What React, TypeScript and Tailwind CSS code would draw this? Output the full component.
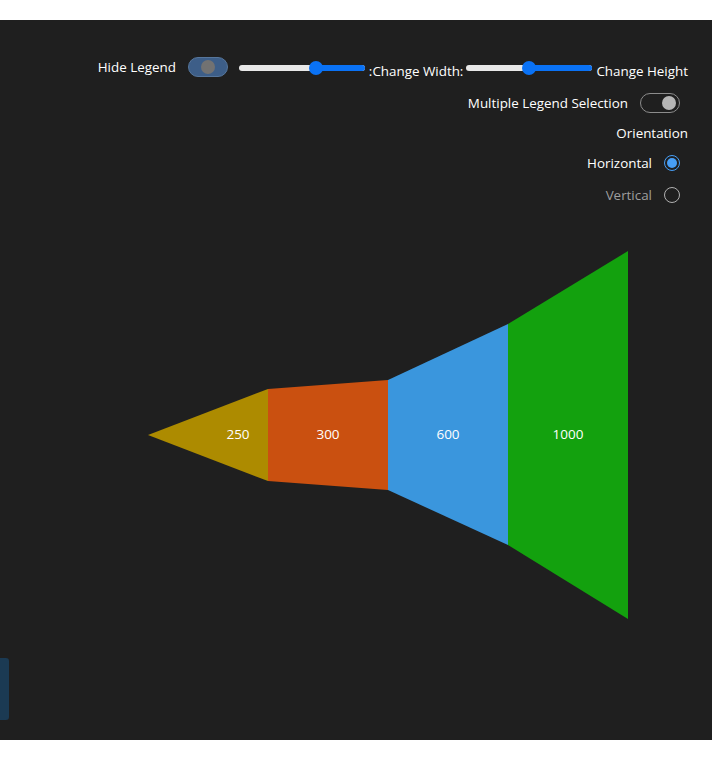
import React from "react";

const font = { fontFamily: '"Open Sans", "Noto Sans", Arial, sans-serif' };

function Slider({ pos }: { pos: number }) {
  return (
    <div className="relative w-[126px] h-[16px] mt-[4px]">
      <div className="absolute left-0 right-0 top-[5px] h-[6px] rounded-full bg-[#e8e8e8]" />
      <div
        className="absolute right-0 top-[5px] h-[6px] rounded-r-full bg-[#0a72f5]"
        style={{ left: pos }}
      />
      <div
        className="absolute top-[1px] w-[14px] h-[14px] rounded-full bg-[#0a72f5]"
        style={{ left: pos - 7 }}
      />
    </div>
  );
}

export default function App() {
  return (
    <div className="bg-white pt-[20px] pb-[19px]" style={font}>
      <div className="relative h-[720px] bg-[#1f1f1f] text-white text-[13.4px] leading-[20px]">
        <div className="flex flex-col items-end pr-[24px] pt-[36px]">
          <div className="flex items-start h-[22px]">
            <span className="mt-[1px]">Hide Legend</span>
            <div className="ml-[12px] mt-[1px] w-[40px] h-[20px] rounded-full bg-[#3d5e88] border border-[#56769c] flex items-center justify-center">
              <div className="w-[14px] h-[14px] rounded-full bg-[#727272]" />
            </div>
            <div className="ml-[11px]">
              <Slider pos={77} />
            </div>
            <span className="ml-[4px] mt-[5px]">:Change Width:</span>
            <div className="ml-[3px]">
              <Slider pos={63} />
            </div>
            <span className="ml-[4px] mt-[5px]">Change Height</span>
          </div>
          <div className="flex items-center h-[22px] mt-[14px] pr-[8px]">
            <span>Multiple Legend Selection</span>
            <div className="ml-[12px] w-[40px] h-[20px] rounded-full border border-[#8c8c8c] flex items-center justify-end pr-[3px]">
              <div className="w-[14px] h-[14px] rounded-full bg-[#b5b5b5]" />
            </div>
          </div>
          <div className="flex items-center h-[22px] mt-[8px]">
            <span>Orientation</span>
          </div>
          <div className="flex items-center h-[22px] mt-[8px] pr-[8px]">
            <span>Horizontal</span>
            <div className="ml-[12px] w-[16px] h-[16px] rounded-full border border-[#479ef5] flex items-center justify-center">
              <div className="w-[10px] h-[10px] rounded-full bg-[#479ef5]" />
            </div>
          </div>
          <div className="flex items-center h-[22px] mt-[10px] pr-[8px]">
            <span className="text-[#9e9e9e]">Vertical</span>
            <div className="ml-[12px] w-[16px] h-[16px] rounded-full border border-[#b0b0b0]" />
          </div>
        </div>
        <svg
          className="block mt-[14px]"
          width={712}
          height={440}
          viewBox="0 220 712 440"
        >
          <polygon points="148,435 268,389 268,481" fill="#ad8b00" />
          <polygon points="268,389 388,380 388,490 268,481" fill="#ca5010" />
          <polygon points="388,380 508,324 508,545 388,490" fill="#3a96dd" />
          <polygon points="508,324 628,251 628,619 508,545" fill="#13a10e" />
          <g fill="#ffffff" fontSize="13.5" textAnchor="middle" style={font}>
            <text x={238} y={439}>250</text>
            <text x={328} y={439}>300</text>
            <text x={448} y={439}>600</text>
            <text x={568} y={439}>1000</text>
          </g>
        </svg>
        <div className="absolute left-0 top-[638px] w-[9px] h-[62px] rounded-r-[3px] bg-[#1b3a53]" />
      </div>
    </div>
  );
}
